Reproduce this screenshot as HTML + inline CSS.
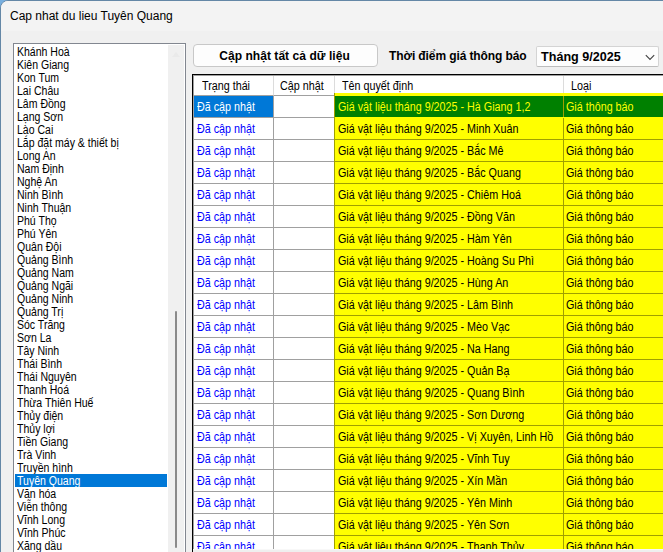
<!DOCTYPE html><html><head><meta charset="utf-8"><title>Cap nhat du lieu Tuyên Quang</title><style>
*{margin:0;padding:0;box-sizing:border-box}
html,body{width:663px;height:552px;overflow:hidden}
body{background:#78afdf;font-family:"Liberation Sans",sans-serif;font-size:11px;color:#000;position:relative}
.win{position:absolute;left:0;top:0;width:700px;height:600px;background:#f0f0f0;border:1px solid #6487a6;border-radius:8px 0 0 0;overflow:hidden}
.tb{position:absolute;left:0;top:0;width:700px;height:30px;background:#f3f3f3}
.title{position:absolute;left:9px;top:7px;font-size:12px;line-height:16px;white-space:nowrap;letter-spacing:0px}
.lb{position:absolute;left:12px;top:42px;width:173px;height:540px;border:1px solid #828790;background:#fff}
.lb .it{position:absolute;left:1px;width:152px;height:13px;line-height:13px;padding-left:1.6px;white-space:nowrap}
.lb .it.sel{background:#0078d7;color:#fff}
.sb{position:absolute;left:154px;top:1px;width:16px;height:540px;background:#f0f0f0}
.thumb{position:absolute;left:7px;top:266px;width:2px;height:237px;background:#8a8a8a;border-radius:1px}
.btn{position:absolute;left:192px;top:43px;width:185px;height:23px;border:1px solid #c8c8c8;padding-right:2px;border-radius:4px;background:#fdfdfd;font-weight:bold;font-size:12px;text-align:center;line-height:21px;padding-top:1px;letter-spacing:.05px;white-space:nowrap}
.lbl{position:absolute;left:388px;top:47px;font-weight:bold;font-size:12px;line-height:16px;white-space:nowrap;letter-spacing:-.1px}
.cb{position:absolute;left:535px;top:45px;width:123px;height:21px;border:1px solid #d4d4d4;border-bottom-color:#bdbdbd;border-radius:2px;background:#fdfdfd;font-weight:bold;font-size:12.6px;line-height:20px;padding-top:0px;padding-left:4px;white-space:nowrap}
.cb svg{position:absolute;right:3px;top:7px}
.grid{position:absolute;left:191px;top:73px;width:520px;height:520px;border:1px solid #000;background:#fff;overflow:hidden}
.grid .in{position:absolute;left:0;top:0;width:600px;height:600px;border-left:1px solid #a0a0a0;border-top:1px solid #a0a0a0}
.t{display:inline-block;font-size:12.5px;transform:scaleX(.86);transform-origin:0 50%;white-space:nowrap}
.lb .t{transform:scaleX(.842);position:relative;top:1px}
.c{position:absolute;white-space:nowrap;overflow:hidden;line-height:23px;height:22px}
.h{position:absolute;top:1px;height:20px;line-height:21px;border-right:1px solid #dcdcdc;border-bottom:1px solid #a0a0a0;background:#fff;white-space:nowrap}
</style></head><body>
<div class="win"><div class="tb"></div><div class="title">Cap nhat du lieu Tuyên Quang</div>
<div class="lb">
<div class="it" style="top:1px"><span class="t">Khánh Hoà</span></div>
<div class="it" style="top:14px"><span class="t">Kiên Giang</span></div>
<div class="it" style="top:27px"><span class="t">Kon Tum</span></div>
<div class="it" style="top:40px"><span class="t">Lai Châu</span></div>
<div class="it" style="top:53px"><span class="t">Lâm Đồng</span></div>
<div class="it" style="top:66px"><span class="t">Lạng Sơn</span></div>
<div class="it" style="top:79px"><span class="t">Lào Cai</span></div>
<div class="it" style="top:92px"><span class="t">Lắp đặt máy &amp; thiết bị</span></div>
<div class="it" style="top:105px"><span class="t">Long An</span></div>
<div class="it" style="top:118px"><span class="t">Nam Định</span></div>
<div class="it" style="top:131px"><span class="t">Nghệ An</span></div>
<div class="it" style="top:144px"><span class="t">Ninh Bình</span></div>
<div class="it" style="top:157px"><span class="t">Ninh Thuận</span></div>
<div class="it" style="top:170px"><span class="t">Phú Thọ</span></div>
<div class="it" style="top:183px"><span class="t">Phú Yên</span></div>
<div class="it" style="top:196px"><span class="t">Quân Đội</span></div>
<div class="it" style="top:209px"><span class="t">Quảng Bình</span></div>
<div class="it" style="top:222px"><span class="t">Quảng Nam</span></div>
<div class="it" style="top:235px"><span class="t">Quảng Ngãi</span></div>
<div class="it" style="top:248px"><span class="t">Quảng Ninh</span></div>
<div class="it" style="top:261px"><span class="t">Quảng Trị</span></div>
<div class="it" style="top:274px"><span class="t">Sóc Trăng</span></div>
<div class="it" style="top:287px"><span class="t">Sơn La</span></div>
<div class="it" style="top:300px"><span class="t">Tây Ninh</span></div>
<div class="it" style="top:313px"><span class="t">Thái Bình</span></div>
<div class="it" style="top:326px"><span class="t">Thái Nguyên</span></div>
<div class="it" style="top:339px"><span class="t">Thanh Hoá</span></div>
<div class="it" style="top:352px"><span class="t">Thừa Thiên Huế</span></div>
<div class="it" style="top:365px"><span class="t">Thủy điện</span></div>
<div class="it" style="top:378px"><span class="t">Thủy lợi</span></div>
<div class="it" style="top:391px"><span class="t">Tiền Giang</span></div>
<div class="it" style="top:404px"><span class="t">Trà Vinh</span></div>
<div class="it" style="top:417px"><span class="t">Truyền hình</span></div>
<div class="it sel" style="top:430px"><span class="t">Tuyên Quang</span></div>
<div class="it" style="top:443px"><span class="t">Văn hóa</span></div>
<div class="it" style="top:456px"><span class="t">Viễn thông</span></div>
<div class="it" style="top:469px"><span class="t">Vĩnh Long</span></div>
<div class="it" style="top:482px"><span class="t">Vĩnh Phúc</span></div>
<div class="it" style="top:495px"><span class="t">Xăng dầu</span></div>
<div class="sb"><div style="position:absolute;left:4px;top:7px;width:0;height:0;border-left:4px solid transparent;border-right:4px solid transparent;border-bottom:5px solid #eaeaea"></div><div class="thumb"></div></div>
</div>
<div class="btn">Cập nhật tất cả dữ liệu</div>
<div class="lbl">Thời điểm giá thông báo</div>
<div class="cb">Tháng 9/2025<svg width="10" height="7" viewBox="0 0 10 7"><path d="M0.8 1.2 L5 5.4 L9.2 1.2" fill="none" stroke="#444" stroke-width="1.15"/></svg></div>
<div class="grid"><div class="in">
<div class="h" style="left:0px;top:0px;width:80px;padding-left:8px"><span class="t">Trạng thái</span></div>
<div class="h" style="left:80px;top:0px;width:61px;padding-left:6.4px"><span class="t">Cập nhật</span></div>
<div class="h" style="left:141px;top:0px;width:229px;padding-left:7px"><span class="t">Tên quyết định</span></div>
<div class="h" style="left:370px;top:0px;width:137px;padding-left:7px"><span class="t">Loại</span></div>
<div class="c" style="left:0px;top:20px;width:80px;border-right:1px solid #a0a0a0;border-bottom:1px solid #a0a0a0;padding-left:2.6px;background:#0078d7;color:#fff;"><span class="t">Đã cập nhật</span></div>
<div class="c" style="left:80px;top:20px;width:60px;border-bottom:1px solid #a0a0a0;"></div>
<div class="c" style="left:140px;top:17px;width:400px;height:25px;background:#ff0;border-left:1px solid #a0a000"></div>
<div class="c" style="left:141px;top:20px;width:229px;height:21px;background:#008000;color:#ff0;border-right:1px solid #a0a000;padding-left:2.6px;"><span class="t">Giá vật liệu tháng 9/2025 - Hà Giang 1,2</span></div>
<div class="c" style="left:370px;top:20px;width:200px;height:21px;background:#008000;color:#ff0;padding-left:2px;"><span class="t">Giá thông báo</span></div>
<div class="c" style="left:0px;top:42px;width:80px;border-right:1px solid #a0a0a0;border-bottom:1px solid #a0a0a0;padding-left:2.6px;color:#00f;"><span class="t">Đã cập nhật</span></div>
<div class="c" style="left:80px;top:42px;width:60px;border-bottom:1px solid #a0a0a0;"></div>
<div class="c" style="left:140px;top:42px;width:230px;background:#ff0;border-left:1px solid #a0a000;border-right:1px solid #a0a000;border-bottom:1px solid #a0a000;padding-left:2.6px;"><span class="t">Giá vật liệu tháng 9/2025 - Minh Xuân</span></div>
<div class="c" style="left:370px;top:42px;width:200px;background:#ff0;border-bottom:1px solid #a0a000;padding-left:2px;"><span class="t">Giá thông báo</span></div>
<div class="c" style="left:0px;top:64px;width:80px;border-right:1px solid #a0a0a0;border-bottom:1px solid #a0a0a0;padding-left:2.6px;color:#00f;"><span class="t">Đã cập nhật</span></div>
<div class="c" style="left:80px;top:64px;width:60px;border-bottom:1px solid #a0a0a0;"></div>
<div class="c" style="left:140px;top:64px;width:230px;background:#ff0;border-left:1px solid #a0a000;border-right:1px solid #a0a000;border-bottom:1px solid #a0a000;padding-left:2.6px;"><span class="t">Giá vật liệu tháng 9/2025 - Bắc Mê</span></div>
<div class="c" style="left:370px;top:64px;width:200px;background:#ff0;border-bottom:1px solid #a0a000;padding-left:2px;"><span class="t">Giá thông báo</span></div>
<div class="c" style="left:0px;top:86px;width:80px;border-right:1px solid #a0a0a0;border-bottom:1px solid #a0a0a0;padding-left:2.6px;color:#00f;"><span class="t">Đã cập nhật</span></div>
<div class="c" style="left:80px;top:86px;width:60px;border-bottom:1px solid #a0a0a0;"></div>
<div class="c" style="left:140px;top:86px;width:230px;background:#ff0;border-left:1px solid #a0a000;border-right:1px solid #a0a000;border-bottom:1px solid #a0a000;padding-left:2.6px;"><span class="t">Giá vật liệu tháng 9/2025 - Bắc Quang</span></div>
<div class="c" style="left:370px;top:86px;width:200px;background:#ff0;border-bottom:1px solid #a0a000;padding-left:2px;"><span class="t">Giá thông báo</span></div>
<div class="c" style="left:0px;top:108px;width:80px;border-right:1px solid #a0a0a0;border-bottom:1px solid #a0a0a0;padding-left:2.6px;color:#00f;"><span class="t">Đã cập nhật</span></div>
<div class="c" style="left:80px;top:108px;width:60px;border-bottom:1px solid #a0a0a0;"></div>
<div class="c" style="left:140px;top:108px;width:230px;background:#ff0;border-left:1px solid #a0a000;border-right:1px solid #a0a000;border-bottom:1px solid #a0a000;padding-left:2.6px;"><span class="t">Giá vật liệu tháng 9/2025 - Chiêm Hoá</span></div>
<div class="c" style="left:370px;top:108px;width:200px;background:#ff0;border-bottom:1px solid #a0a000;padding-left:2px;"><span class="t">Giá thông báo</span></div>
<div class="c" style="left:0px;top:130px;width:80px;border-right:1px solid #a0a0a0;border-bottom:1px solid #a0a0a0;padding-left:2.6px;color:#00f;"><span class="t">Đã cập nhật</span></div>
<div class="c" style="left:80px;top:130px;width:60px;border-bottom:1px solid #a0a0a0;"></div>
<div class="c" style="left:140px;top:130px;width:230px;background:#ff0;border-left:1px solid #a0a000;border-right:1px solid #a0a000;border-bottom:1px solid #a0a000;padding-left:2.6px;"><span class="t">Giá vật liệu tháng 9/2025 - Đồng Văn</span></div>
<div class="c" style="left:370px;top:130px;width:200px;background:#ff0;border-bottom:1px solid #a0a000;padding-left:2px;"><span class="t">Giá thông báo</span></div>
<div class="c" style="left:0px;top:152px;width:80px;border-right:1px solid #a0a0a0;border-bottom:1px solid #a0a0a0;padding-left:2.6px;color:#00f;"><span class="t">Đã cập nhật</span></div>
<div class="c" style="left:80px;top:152px;width:60px;border-bottom:1px solid #a0a0a0;"></div>
<div class="c" style="left:140px;top:152px;width:230px;background:#ff0;border-left:1px solid #a0a000;border-right:1px solid #a0a000;border-bottom:1px solid #a0a000;padding-left:2.6px;"><span class="t">Giá vật liệu tháng 9/2025 - Hàm Yên</span></div>
<div class="c" style="left:370px;top:152px;width:200px;background:#ff0;border-bottom:1px solid #a0a000;padding-left:2px;"><span class="t">Giá thông báo</span></div>
<div class="c" style="left:0px;top:174px;width:80px;border-right:1px solid #a0a0a0;border-bottom:1px solid #a0a0a0;padding-left:2.6px;color:#00f;"><span class="t">Đã cập nhật</span></div>
<div class="c" style="left:80px;top:174px;width:60px;border-bottom:1px solid #a0a0a0;"></div>
<div class="c" style="left:140px;top:174px;width:230px;background:#ff0;border-left:1px solid #a0a000;border-right:1px solid #a0a000;border-bottom:1px solid #a0a000;padding-left:2.6px;"><span class="t">Giá vật liệu tháng 9/2025 - Hoàng Su Phì</span></div>
<div class="c" style="left:370px;top:174px;width:200px;background:#ff0;border-bottom:1px solid #a0a000;padding-left:2px;"><span class="t">Giá thông báo</span></div>
<div class="c" style="left:0px;top:196px;width:80px;border-right:1px solid #a0a0a0;border-bottom:1px solid #a0a0a0;padding-left:2.6px;color:#00f;"><span class="t">Đã cập nhật</span></div>
<div class="c" style="left:80px;top:196px;width:60px;border-bottom:1px solid #a0a0a0;"></div>
<div class="c" style="left:140px;top:196px;width:230px;background:#ff0;border-left:1px solid #a0a000;border-right:1px solid #a0a000;border-bottom:1px solid #a0a000;padding-left:2.6px;"><span class="t">Giá vật liệu tháng 9/2025 - Hùng An</span></div>
<div class="c" style="left:370px;top:196px;width:200px;background:#ff0;border-bottom:1px solid #a0a000;padding-left:2px;"><span class="t">Giá thông báo</span></div>
<div class="c" style="left:0px;top:218px;width:80px;border-right:1px solid #a0a0a0;border-bottom:1px solid #a0a0a0;padding-left:2.6px;color:#00f;"><span class="t">Đã cập nhật</span></div>
<div class="c" style="left:80px;top:218px;width:60px;border-bottom:1px solid #a0a0a0;"></div>
<div class="c" style="left:140px;top:218px;width:230px;background:#ff0;border-left:1px solid #a0a000;border-right:1px solid #a0a000;border-bottom:1px solid #a0a000;padding-left:2.6px;"><span class="t">Giá vật liệu tháng 9/2025 - Lâm Bình</span></div>
<div class="c" style="left:370px;top:218px;width:200px;background:#ff0;border-bottom:1px solid #a0a000;padding-left:2px;"><span class="t">Giá thông báo</span></div>
<div class="c" style="left:0px;top:240px;width:80px;border-right:1px solid #a0a0a0;border-bottom:1px solid #a0a0a0;padding-left:2.6px;color:#00f;"><span class="t">Đã cập nhật</span></div>
<div class="c" style="left:80px;top:240px;width:60px;border-bottom:1px solid #a0a0a0;"></div>
<div class="c" style="left:140px;top:240px;width:230px;background:#ff0;border-left:1px solid #a0a000;border-right:1px solid #a0a000;border-bottom:1px solid #a0a000;padding-left:2.6px;"><span class="t">Giá vật liệu tháng 9/2025 - Mèo Vạc</span></div>
<div class="c" style="left:370px;top:240px;width:200px;background:#ff0;border-bottom:1px solid #a0a000;padding-left:2px;"><span class="t">Giá thông báo</span></div>
<div class="c" style="left:0px;top:262px;width:80px;border-right:1px solid #a0a0a0;border-bottom:1px solid #a0a0a0;padding-left:2.6px;color:#00f;"><span class="t">Đã cập nhật</span></div>
<div class="c" style="left:80px;top:262px;width:60px;border-bottom:1px solid #a0a0a0;"></div>
<div class="c" style="left:140px;top:262px;width:230px;background:#ff0;border-left:1px solid #a0a000;border-right:1px solid #a0a000;border-bottom:1px solid #a0a000;padding-left:2.6px;"><span class="t">Giá vật liệu tháng 9/2025 - Na Hang</span></div>
<div class="c" style="left:370px;top:262px;width:200px;background:#ff0;border-bottom:1px solid #a0a000;padding-left:2px;"><span class="t">Giá thông báo</span></div>
<div class="c" style="left:0px;top:284px;width:80px;border-right:1px solid #a0a0a0;border-bottom:1px solid #a0a0a0;padding-left:2.6px;color:#00f;"><span class="t">Đã cập nhật</span></div>
<div class="c" style="left:80px;top:284px;width:60px;border-bottom:1px solid #a0a0a0;"></div>
<div class="c" style="left:140px;top:284px;width:230px;background:#ff0;border-left:1px solid #a0a000;border-right:1px solid #a0a000;border-bottom:1px solid #a0a000;padding-left:2.6px;"><span class="t">Giá vật liệu tháng 9/2025 - Quản Bạ</span></div>
<div class="c" style="left:370px;top:284px;width:200px;background:#ff0;border-bottom:1px solid #a0a000;padding-left:2px;"><span class="t">Giá thông báo</span></div>
<div class="c" style="left:0px;top:306px;width:80px;border-right:1px solid #a0a0a0;border-bottom:1px solid #a0a0a0;padding-left:2.6px;color:#00f;"><span class="t">Đã cập nhật</span></div>
<div class="c" style="left:80px;top:306px;width:60px;border-bottom:1px solid #a0a0a0;"></div>
<div class="c" style="left:140px;top:306px;width:230px;background:#ff0;border-left:1px solid #a0a000;border-right:1px solid #a0a000;border-bottom:1px solid #a0a000;padding-left:2.6px;"><span class="t">Giá vật liệu tháng 9/2025 - Quang Bình</span></div>
<div class="c" style="left:370px;top:306px;width:200px;background:#ff0;border-bottom:1px solid #a0a000;padding-left:2px;"><span class="t">Giá thông báo</span></div>
<div class="c" style="left:0px;top:328px;width:80px;border-right:1px solid #a0a0a0;border-bottom:1px solid #a0a0a0;padding-left:2.6px;color:#00f;"><span class="t">Đã cập nhật</span></div>
<div class="c" style="left:80px;top:328px;width:60px;border-bottom:1px solid #a0a0a0;"></div>
<div class="c" style="left:140px;top:328px;width:230px;background:#ff0;border-left:1px solid #a0a000;border-right:1px solid #a0a000;border-bottom:1px solid #a0a000;padding-left:2.6px;"><span class="t">Giá vật liệu tháng 9/2025 - Sơn Dương</span></div>
<div class="c" style="left:370px;top:328px;width:200px;background:#ff0;border-bottom:1px solid #a0a000;padding-left:2px;"><span class="t">Giá thông báo</span></div>
<div class="c" style="left:0px;top:350px;width:80px;border-right:1px solid #a0a0a0;border-bottom:1px solid #a0a0a0;padding-left:2.6px;color:#00f;"><span class="t">Đã cập nhật</span></div>
<div class="c" style="left:80px;top:350px;width:60px;border-bottom:1px solid #a0a0a0;"></div>
<div class="c" style="left:140px;top:350px;width:230px;background:#ff0;border-left:1px solid #a0a000;border-right:1px solid #a0a000;border-bottom:1px solid #a0a000;padding-left:2.6px;"><span class="t">Giá vật liệu tháng 9/2025 - Vị Xuyên, Linh Hồ</span></div>
<div class="c" style="left:370px;top:350px;width:200px;background:#ff0;border-bottom:1px solid #a0a000;padding-left:2px;"><span class="t">Giá thông báo</span></div>
<div class="c" style="left:0px;top:372px;width:80px;border-right:1px solid #a0a0a0;border-bottom:1px solid #a0a0a0;padding-left:2.6px;color:#00f;"><span class="t">Đã cập nhật</span></div>
<div class="c" style="left:80px;top:372px;width:60px;border-bottom:1px solid #a0a0a0;"></div>
<div class="c" style="left:140px;top:372px;width:230px;background:#ff0;border-left:1px solid #a0a000;border-right:1px solid #a0a000;border-bottom:1px solid #a0a000;padding-left:2.6px;"><span class="t">Giá vật liệu tháng 9/2025 - Vĩnh Tuy</span></div>
<div class="c" style="left:370px;top:372px;width:200px;background:#ff0;border-bottom:1px solid #a0a000;padding-left:2px;"><span class="t">Giá thông báo</span></div>
<div class="c" style="left:0px;top:394px;width:80px;border-right:1px solid #a0a0a0;border-bottom:1px solid #a0a0a0;padding-left:2.6px;color:#00f;"><span class="t">Đã cập nhật</span></div>
<div class="c" style="left:80px;top:394px;width:60px;border-bottom:1px solid #a0a0a0;"></div>
<div class="c" style="left:140px;top:394px;width:230px;background:#ff0;border-left:1px solid #a0a000;border-right:1px solid #a0a000;border-bottom:1px solid #a0a000;padding-left:2.6px;"><span class="t">Giá vật liệu tháng 9/2025 - Xín Mần</span></div>
<div class="c" style="left:370px;top:394px;width:200px;background:#ff0;border-bottom:1px solid #a0a000;padding-left:2px;"><span class="t">Giá thông báo</span></div>
<div class="c" style="left:0px;top:416px;width:80px;border-right:1px solid #a0a0a0;border-bottom:1px solid #a0a0a0;padding-left:2.6px;color:#00f;"><span class="t">Đã cập nhật</span></div>
<div class="c" style="left:80px;top:416px;width:60px;border-bottom:1px solid #a0a0a0;"></div>
<div class="c" style="left:140px;top:416px;width:230px;background:#ff0;border-left:1px solid #a0a000;border-right:1px solid #a0a000;border-bottom:1px solid #a0a000;padding-left:2.6px;"><span class="t">Giá vật liệu tháng 9/2025 - Yên Minh</span></div>
<div class="c" style="left:370px;top:416px;width:200px;background:#ff0;border-bottom:1px solid #a0a000;padding-left:2px;"><span class="t">Giá thông báo</span></div>
<div class="c" style="left:0px;top:438px;width:80px;border-right:1px solid #a0a0a0;border-bottom:1px solid #a0a0a0;padding-left:2.6px;color:#00f;"><span class="t">Đã cập nhật</span></div>
<div class="c" style="left:80px;top:438px;width:60px;border-bottom:1px solid #a0a0a0;"></div>
<div class="c" style="left:140px;top:438px;width:230px;background:#ff0;border-left:1px solid #a0a000;border-right:1px solid #a0a000;border-bottom:1px solid #a0a000;padding-left:2.6px;"><span class="t">Giá vật liệu tháng 9/2025 - Yên Sơn</span></div>
<div class="c" style="left:370px;top:438px;width:200px;background:#ff0;border-bottom:1px solid #a0a000;padding-left:2px;"><span class="t">Giá thông báo</span></div>
<div class="c" style="left:0px;top:460px;width:80px;border-right:1px solid #a0a0a0;border-bottom:1px solid #a0a0a0;padding-left:2.6px;color:#00f;"><span class="t">Đã cập nhật</span></div>
<div class="c" style="left:80px;top:460px;width:60px;border-bottom:1px solid #a0a0a0;"></div>
<div class="c" style="left:140px;top:460px;width:230px;background:#ff0;border-left:1px solid #a0a000;border-right:1px solid #a0a000;border-bottom:1px solid #a0a000;padding-left:2.6px;"><span class="t">Giá vật liệu tháng 9/2025 - Thanh Thủy</span></div>
<div class="c" style="left:370px;top:460px;width:200px;background:#ff0;border-bottom:1px solid #a0a000;padding-left:2px;"><span class="t">Giá thông báo</span></div>
<div style="position:absolute;left:-1px;top:473px;width:600px;height:10px;background:#efefef;border-top:1px solid #f8f8f8"></div>
</div></div>
</div></body></html>
